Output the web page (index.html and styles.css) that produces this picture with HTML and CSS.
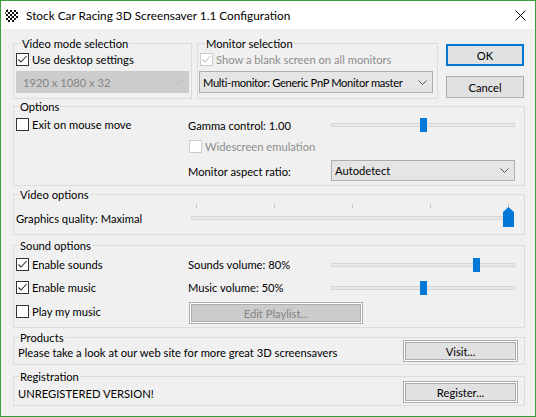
FILE: index.html
```html
<!DOCTYPE html>
<html>
<head>
<meta charset="utf-8">
<link rel="stylesheet" href="styles.css">
</head>
<body>
<div class="window">
  <div class="titlebar">
    <svg class="app-icon" width="13" height="13" viewBox="0 0 13 13">
      <rect width="13" height="13" fill="#fff"/>
      <g fill="#111">
        <rect x="1" y="1" width="2" height="2"/><rect x="5" y="1" width="2" height="2"/><rect x="9" y="1" width="2" height="2"/>
        <rect x="3" y="3" width="2" height="2"/><rect x="7" y="3" width="2" height="2"/><rect x="11" y="3" width="2" height="2"/>
        <rect x="1" y="5" width="2" height="2"/><rect x="5" y="5" width="2" height="2"/><rect x="9" y="5" width="2" height="2"/>
        <rect x="3" y="7" width="2" height="2"/><rect x="7" y="7" width="2" height="2"/><rect x="11" y="7" width="2" height="2"/>
        <rect x="1" y="9" width="2" height="2"/><rect x="5" y="9" width="2" height="2"/><rect x="9" y="9" width="2" height="2"/>
        <rect x="3" y="11" width="2" height="2"/><rect x="7" y="11" width="2" height="2"/>
      </g>
      <g fill="#666">
        <rect x="0" y="3" width="1" height="2"/><rect x="2" y="0" width="1" height="1"/><rect x="6" y="8" width="1" height="1"/><rect x="10" y="10" width="1" height="1"/>
      </g>
    </svg>
    <span class="title">Stock Car Racing 3D Screensaver 1.1 Configuration</span>
    <span class="close">
      <svg width="11" height="11" viewBox="0 0 11 11"><path d="M0.5 0.5 L10.5 10.5 M10.5 0.5 L0.5 10.5" stroke="#000" stroke-width="1"/></svg>
    </span>
  </div>

  <div class="client">
    <div class="row1">
      <div class="group g-video">
        <div class="legend">Video mode selection</div>
        <label class="cb-row">
          <span class="box"><svg width="11" height="11" viewBox="0 0 11 11"><polyline points="1.5,5.5 4,8 9.5,2" fill="none" stroke="#333" stroke-width="1.1"/></svg></span>
          <span>Use desktop settings</span>
        </label>
        <div class="combo disabled combo-video">
          <span>1920 x 1080 x 32</span>
          <svg class="chev" width="9" height="5" viewBox="0 0 9 5"><polyline points="0.5,0.5 4.5,4.5 8.5,0.5" fill="none" stroke="#bdbdbd" stroke-width="1"/></svg>
        </div>
      </div>

      <div class="group g-monitor">
        <div class="legend">Monitor selection</div>
        <label class="cb-row dis">
          <span class="box"><svg width="11" height="11" viewBox="0 0 11 11"><polyline points="1.5,5.5 4,8 9.5,2" fill="none" stroke="#c4c4c4" stroke-width="1.1"/></svg></span>
          <span>Show a blank screen on all monitors</span>
        </label>
        <div class="combo combo-monitor">
          <span class="tight">Multi-monitor: Generic PnP Monitor master</span>
          <svg class="chev" width="9" height="5" viewBox="0 0 9 5"><polyline points="0.5,0.5 4.5,4.5 8.5,0.5" fill="none" stroke="#555" stroke-width="1"/></svg>
        </div>
      </div>

      <div class="buttons">
        <button class="btn ok">OK</button>
        <button class="btn cancel">Cancel</button>
      </div>
    </div>

    <div class="group g-options">
      <div class="legend">Options</div>
      <div class="grid3 opt-grid">
        <label class="cb-row exit">
          <span class="box"></span>
          <span>Exit on mouse move</span>
        </label>
        <span class="lbl">Gamma control: 1.00</span>
        <div class="slider"><div class="track"></div><div class="thumb" style="left:89px"></div></div>

        <span></span>
        <label class="cb-row dis wide">
          <span class="box"></span>
          <span>Widescreen emulation</span>
        </label>

        <span></span>
        <span class="lbl aspect-lbl">Monitor aspect ratio:</span>
        <div class="combo combo-aspect">
          <span>Autodetect</span>
          <svg class="chev" width="9" height="5" viewBox="0 0 9 5"><polyline points="0.5,0.5 4.5,4.5 8.5,0.5" fill="none" stroke="#555" stroke-width="1"/></svg>
        </div>
      </div>
    </div>

    <div class="group g-vopts">
      <div class="legend">Video options</div>
      <div class="vo-row">
        <span class="lbl">Graphics quality: Maximal</span>
        <div class="tslider">
          <span class="tick" style="left:5px"></span>
          <span class="tick" style="left:83px"></span>
          <span class="tick" style="left:161px"></span>
          <span class="tick" style="left:239px"></span>
          <span class="tick" style="left:317px"></span>
          <div class="track"></div>
          <div class="pthumb" style="left:312px"></div>
        </div>
      </div>
    </div>

    <div class="group g-sound">
      <div class="legend">Sound options</div>
      <div class="grid3 snd-grid">
        <label class="cb-row">
          <span class="box"><svg width="11" height="11" viewBox="0 0 11 11"><polyline points="1.5,5.5 4,8 9.5,2" fill="none" stroke="#333" stroke-width="1.1"/></svg></span>
          <span>Enable sounds</span>
        </label>
        <span class="lbl">Sounds volume: 80%</span>
        <div class="slider"><div class="track"></div><div class="thumb" style="left:142px"></div></div>

        <label class="cb-row">
          <span class="box"><svg width="11" height="11" viewBox="0 0 11 11"><polyline points="1.5,5.5 4,8 9.5,2" fill="none" stroke="#333" stroke-width="1.1"/></svg></span>
          <span>Enable music</span>
        </label>
        <span class="lbl">Music volume: 50%</span>
        <div class="slider"><div class="track"></div><div class="thumb" style="left:89px"></div></div>

        <label class="cb-row">
          <span class="box"></span>
          <span>Play my music</span>
        </label>
        <button class="btn btn3d disabled-btn playlist">Edit Playlist...</button>
      </div>
    </div>

    <div class="group g-products">
      <div class="legend">Products</div>
      <div class="line-row">
        <span class="line-text">Please take a look at our web site for more great 3D screensavers</span>
        <button class="btn btn3d wide-btn">Visit...</button>
      </div>
    </div>

    <div class="group g-reg">
      <div class="legend">Registration</div>
      <div class="line-row">
        <span class="line-text">UNREGISTERED VERSION!</span>
        <button class="btn btn3d wide-btn">Register...</button>
      </div>
    </div>
  </div>
</div>
</body>
</html>
```
FILE: styles.css
```css
* { box-sizing: border-box; }

body {
  margin: 0;
  font-family: Lato, "Noto Sans", sans-serif;
  font-size: 11.2px;
  color: #000;
  background: #fff;
}

.window {
  width: 536px;
  height: 417px;
  border: 1px solid #3c9b3c;
  background: #f0f0f0;
  display: flex;
  flex-direction: column;
}

.titlebar {
  height: 28px;
  background: #fff;
  display: flex;
  align-items: center;
  padding-left: 4px;
  flex: none;
}

.app-icon { margin-right: 8px; flex: none; }

.title { flex: 1; font-size: 11.8px; }

.close {
  width: 29px;
  height: 28px;
  display: flex;
  align-items: center;
  justify-content: center;
}

.client {
  flex: 1;
  padding: 14px 10px 0 12px;
  display: flex;
  flex-direction: column;
}

.group {
  border: 1px solid #dcdcdc;
}

.legend {
  margin: -8px 0 0 5px;
  padding: 0 1px;
  line-height: 15px;
  height: 15px;
  background: #f0f0f0;
  width: max-content;
}

.row1 {
  display: flex;
  height: 56px;
  gap: 5px;
}

.g-video { width: 179px; padding: 0 2px; }
.g-monitor { width: 241px; padding: 0 2px; }

.cb-row {
  display: flex;
  align-items: center;
  gap: 3px;
  height: 17px;
  white-space: nowrap;
}

.box {
  width: 13px;
  height: 13px;
  border: 1px solid #333;
  background: #fff;
  flex: none;
  display: flex;
}

.dis { color: #8d8d8d; }
.dis .box { border-color: #cccccc; }

.combo {
  height: 22px;
  border: 1px solid #adadad;
  background: #e5e5e5;
  display: flex;
  align-items: center;
  justify-content: space-between;
  padding: 0 5px 0 3px;
  white-space: nowrap;
}

.combo.disabled {
  background: #cccccc;
  border-color: #cccccc;
  color: #838383;
}

.chev { flex: none; }

.tight { letter-spacing: -0.35px; }

.combo-video { margin-top: 3px; padding-left: 6px; }
.combo-monitor { margin: 3px 0 0 -1px; width: 234px; }

.buttons {
  margin-left: 3px;
  width: 78px;
  display: flex;
  flex-direction: column;
  padding-top: 1px;
}

.btn {
  font: inherit;
  color: #000;
  height: 22px;
  border: 1px solid #adadad;
  background: #e1e1e1;
  padding: 0;
}

.btn.ok { border: 2px solid #0078d7; }
.btn.cancel { margin-top: 10px; }

.g-options { margin-top: 7px; }

.grid3 {
  display: grid;
  grid-template-columns: 172px 143px 184px;
  padding-left: 2px;
}

.opt-grid {
  grid-template-rows: 22px 20px 25px;
  padding-bottom: 4px;
  align-items: center;
}

.exit { align-self: start; margin-top: 2px; }
.wide { grid-column: 2 / 4; margin-left: 1px; }
.combo-aspect { align-self: end; height: 21px; }
.aspect-lbl { align-self: end; line-height: 17px; padding-bottom: 1px; }

.slider {
  position: relative;
  height: 14px;
}

.track {
  height: 4px;
  margin-top: 5px;
  background: #e7e7e7;
  border: 1px solid #d6d6d6;
}

.thumb {
  position: absolute;
  top: 0;
  width: 7px;
  height: 14px;
  background: #0078d7;
}

.g-vopts { margin-top: 8px; }

.vo-row {
  display: flex;
  height: 32px;
  padding-left: 2px;
}

.vo-row .lbl { align-self: center; width: 175px; }

.tslider {
  position: relative;
  width: 325px;
  height: 24px;
  margin-top: 2px;
}

.tslider .track { margin-top: 12px; width: 319px; }

.tick {
  position: absolute;
  top: 0;
  width: 1px;
  height: 4px;
  background: #c4c4c4;
}

.pthumb {
  position: absolute;
  top: 3px;
  width: 11px;
  height: 20px;
  background: #0078d7;
  clip-path: polygon(0 5px, 50% 0, 100% 5px, 100% 100%, 0 100%);
}

.g-sound { margin-top: 10px; }

.snd-grid {
  grid-template-rows: 23px 23px 25px;
  padding-bottom: 3px;
  align-items: center;
}

.btn3d {
  border: 1px solid #adadad;
  box-shadow: inset 0 0 0 1px #ffffff, inset 0 0 0 2px #adadad;
}

.disabled-btn {
  background: #cccccc;
  color: #838383;
}

.playlist {
  grid-column: 2 / 4;
  width: 174px;
  margin-left: 1px;
  align-self: end;
}

.g-products { margin-top: 9px; }
.g-reg { margin-top: 11px; }

.line-row {
  display: flex;
  align-items: center;
  justify-content: space-between;
  padding: 0 6px 2px 4px;
}

.g-products .line-row { margin-top: -5px; }
.g-reg .line-row { margin-top: -3px; }

.line-text { padding-top: 3px; }

.wide-btn { width: 115px; }
```
